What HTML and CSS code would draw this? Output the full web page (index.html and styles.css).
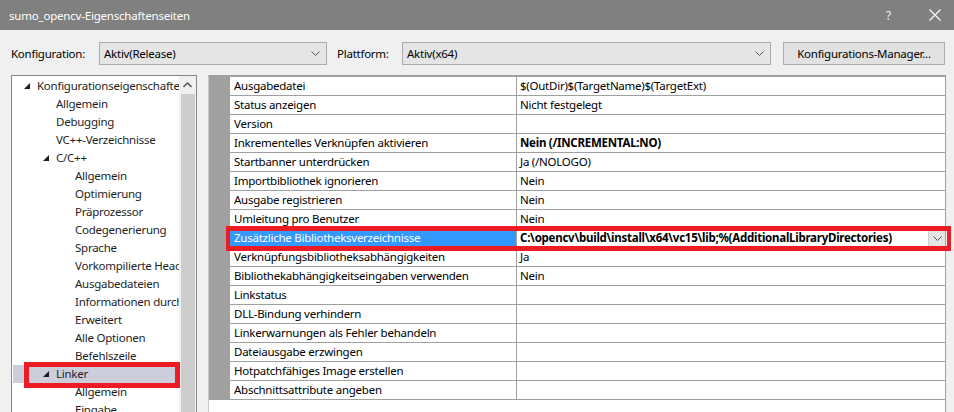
FILE: index.html
```html
<!DOCTYPE html>
<html lang="de">
<head>
<meta charset="utf-8">
<title>sumo_opencv-Eigenschaftenseiten</title>
<link rel="stylesheet" href="styles.css">
</head>
<body>
<div class="window">
  <div class="titlebar">
    <span class="title">sumo_opencv-Eigenschaftenseiten</span>
    <span class="help">?</span>
    <svg class="close" width="12" height="12" viewBox="0 0 12 12"><path d="M0.5 0.5 L11.5 11.5 M11.5 0.5 L0.5 11.5" stroke="#fff" stroke-width="1.1" fill="none"/></svg>
  </div>

  <div class="toolbar">
    <span class="label label-konf">Konfiguration:</span>
    <div class="combo combo-konf">
      <span class="combo-text">Aktiv(Release)</span>
      <svg class="chev" width="9" height="5" viewBox="0 0 9 5"><path d="M0.5 0.5 L4.5 4.5 L8.5 0.5" stroke="#555" stroke-width="1" fill="none"/></svg>
    </div>
    <span class="label label-plat">Plattform:</span>
    <div class="combo combo-plat">
      <span class="combo-text">Aktiv(x64)</span>
      <svg class="chev" width="9" height="5" viewBox="0 0 9 5"><path d="M0.5 0.5 L4.5 4.5 L8.5 0.5" stroke="#555" stroke-width="1" fill="none"/></svg>
    </div>
    <button class="btn">Konfigurations-Manager...</button>
  </div>

  <div class="main">
    <div class="tree">
      <div class="tree-items">
        <div class="node lvl0"><span class="twisty"><svg width="6" height="6" viewBox="0 0 6 6"><polygon points="0,6 6,6 6,0" fill="#1e1e1e"/></svg></span>Konfigurationseigenschaften</div>
        <div class="node lvl1">Allgemein</div>
        <div class="node lvl1">Debugging</div>
        <div class="node lvl1">VC++-Verzeichnisse</div>
        <div class="node lvl1 parent"><span class="twisty"><svg width="6" height="6" viewBox="0 0 6 6"><polygon points="0,6 6,6 6,0" fill="#1e1e1e"/></svg></span>C/C++</div>
        <div class="node lvl2">Allgemein</div>
        <div class="node lvl2">Optimierung</div>
        <div class="node lvl2">Präprozessor</div>
        <div class="node lvl2">Codegenerierung</div>
        <div class="node lvl2">Sprache</div>
        <div class="node lvl2">Vorkompilierte Header</div>
        <div class="node lvl2">Ausgabedateien</div>
        <div class="node lvl2">Informationen durchsuchen</div>
        <div class="node lvl2">Erweitert</div>
        <div class="node lvl2">Alle Optionen</div>
        <div class="node lvl2">Befehlszeile</div>
        <div class="node lvl1 parent selected"><span class="twisty"><svg width="6" height="6" viewBox="0 0 6 6"><polygon points="0,6 6,6 6,0" fill="#1e1e1e"/></svg></span>Linker</div>
        <div class="node lvl2">Allgemein</div>
        <div class="node lvl2">Eingabe</div>
      </div>
      <div class="vscroll">
        <div class="vscroll-arrow"><svg width="9" height="6" viewBox="0 0 9 6"><path d="M0.5 5 L4.5 1 L8.5 5" stroke="#606060" stroke-width="1.6" fill="none"/></svg></div>
        <div class="vscroll-thumb"></div>
      </div>
      <div class="mark mark-tree"></div>
    </div>

    <div class="grid">
      <div class="table">
        <div class="gutter"></div>
        <div class="rows">
          <div class="row"><div class="name">Ausgabedatei</div><div class="value">$(OutDir)$(TargetName)$(TargetExt)</div></div>
          <div class="row"><div class="name">Status anzeigen</div><div class="value">Nicht festgelegt</div></div>
          <div class="row"><div class="name">Version</div><div class="value"></div></div>
          <div class="row"><div class="name">Inkrementelles Verknüpfen aktivieren</div><div class="value bold">Nein (/INCREMENTAL:NO)</div></div>
          <div class="row"><div class="name">Startbanner unterdrücken</div><div class="value">Ja (/NOLOGO)</div></div>
          <div class="row"><div class="name">Importbibliothek ignorieren</div><div class="value">Nein</div></div>
          <div class="row"><div class="name">Ausgabe registrieren</div><div class="value">Nein</div></div>
          <div class="row"><div class="name">Umleitung pro Benutzer</div><div class="value">Nein</div></div>
          <div class="row active"><div class="name">Zusätzliche Bibliotheksverzeichnisse</div><div class="value bold"><span class="value-text">C:\opencv\build\install\x64\vc15\lib;%(AdditionalLibraryDirectories)</span><span class="drop"><svg width="9" height="5" viewBox="0 0 9 5"><path d="M0.5 0.5 L4.5 4.5 L8.5 0.5" stroke="#555" stroke-width="1" fill="none"/></svg></span></div></div>
          <div class="row"><div class="name">Verknüpfungsbibliotheksabhängigkeiten</div><div class="value">Ja</div></div>
          <div class="row"><div class="name">Bibliothekabhängigkeitseingaben verwenden</div><div class="value">Nein</div></div>
          <div class="row"><div class="name">Linkstatus</div><div class="value"></div></div>
          <div class="row"><div class="name">DLL-Bindung verhindern</div><div class="value"></div></div>
          <div class="row"><div class="name">Linkerwarnungen als Fehler behandeln</div><div class="value"></div></div>
          <div class="row"><div class="name">Dateiausgabe erzwingen</div><div class="value"></div></div>
          <div class="row"><div class="name">Hotpatchfähiges Image erstellen</div><div class="value"></div></div>
          <div class="row"><div class="name">Abschnittsattribute angeben</div><div class="value"></div></div>
        </div>
      </div>
      <div class="mark mark-grid"></div>
    </div>
  </div>
</div>
</body>
</html>
```

FILE: styles.css
```css
* { box-sizing: border-box; }
html, body {
  margin: 0;
  padding: 0;
  width: 954px;
  height: 412px;
  overflow: hidden;
  background: #f0f0f0;
}
body {
  font-family: "Noto Sans", "Open Sans", sans-serif;
  font-size: 11.5px;
  letter-spacing: -0.25px;
  color: #000;
}
.window {
  width: 954px;
  height: 412px;
  display: flex;
  flex-direction: column;
}
.titlebar {
  height: 30px;
  flex: none;
  background: #808080;
  color: #fff;
  display: flex;
  align-items: center;
  padding-left: 9px;
  font-size: 11.5px;
  letter-spacing: -0.2px;
}
.title { flex: 1; }
.help {
  font-size: 12px;
  margin-right: 38px;
  color: #f2f2f2;
}
.close { margin-right: 13px; }

.toolbar {
  flex: none;
  height: 45px;
  padding: 12px 0 10px 11px;
  display: flex;
  align-items: center;
}
.label { color: #000; }
.label-konf { width: 88px; }
.label-plat { width: 65px; }
.combo {
  height: 23px;
  background: #e5e5e5;
  border: 1px solid #acacac;
  display: flex;
  align-items: center;
  padding: 0 6px 0 4px;
}
.combo-text { flex: 1; }
.combo-konf { width: 228px; margin-right: 10px; }
.combo-plat { width: 369px; margin-right: 12px; }
.btn {
  width: 162px;
  height: 23px;
  background: #e1e1e1;
  border: 1px solid #adadad;
  font: inherit;
  letter-spacing: inherit;
  color: #000;
  padding: 0;
}

.main {
  flex: 1;
  min-height: 0;
  display: flex;
  padding-left: 11px;
  gap: 11px;
}
.tree {
  position: relative;
  width: 186px;
  background: #fff;
  border: 1px solid #828790;
  border-bottom: none;
  display: flex;
  padding-left: 1px;
}
.tree-items {
  flex: 1;
  min-width: 0;
  padding-top: 1px;
  overflow: hidden;
  color: #1e1e1e;
}
.node {
  height: 18px;
  line-height: 18px;
  white-space: nowrap;
  overflow: hidden;
  display: flex;
  align-items: center;
}
.lvl0 { padding-left: 11px; }
.lvl1 { padding-left: 43px; }
.lvl1.parent { padding-left: 30px; }
.lvl2 { padding-left: 62px; }
.twisty {
  width: 13px;
  flex: none;
  display: flex;
  align-items: center;
}
.twisty svg { display: block; }
.node.selected { background: #cccedb; }
.vscroll {
  width: 17px;
  flex: none;
  background: #f0f0f0;
  display: flex;
  flex-direction: column;
  align-items: center;
}
.vscroll-arrow {
  height: 17px;
  display: flex;
  align-items: center;
  justify-content: center;
  width: 100%;
}
.vscroll-thumb {
  margin-top: 1px;
  width: 14px;
  flex: 1;
  background: #cdcdcd;
}

.grid {
  position: relative;
  width: 738px;
  background: #fff;
  border-top: 2px solid #a0a0a0;
  border-left: 1px solid #c8c8c8;
  border-right: 1px solid #a0a0a0;
}
.table {
  display: flex;
}
.gutter {
  width: 21px;
  flex: none;
  background: #a0a0a0;
}
.rows {
  flex: 1;
  min-width: 0;
}
.row {
  display: flex;
  height: 19px;
  border-bottom: 1px solid #a0a0a0;
  line-height: 18px;
}
.name {
  width: 287px;
  flex: none;
  border-right: 1px solid #a0a0a0;
  padding-left: 4px;
  white-space: nowrap;
  overflow: hidden;
}
.value {
  flex: 1;
  min-width: 0;
  padding-left: 3px;
  white-space: nowrap;
  overflow: hidden;
  display: flex;
  align-items: center;
}
.bold { font-weight: bold; }
.value-text { flex: 1; }
.row.active .name {
  background: #3399ff;
  color: #fff;
}
.drop {
  width: 17px;
  height: 16px;
  background: #e5e5e5;
  border-left: 1px solid #d0d0d0;
  display: flex;
  align-items: center;
  justify-content: center;
  flex: none;
}

.mark {
  position: absolute;
  border: 5px solid #ed1c24;
  pointer-events: none;
}
.mark-tree {
  left: 12px;
  top: 286px;
  width: 156px;
  height: 26px;
}
.mark-grid {
  left: 17px;
  top: 149px;
  width: 725px;
  height: 25px;
  border-width: 5px 4px;
}
```
